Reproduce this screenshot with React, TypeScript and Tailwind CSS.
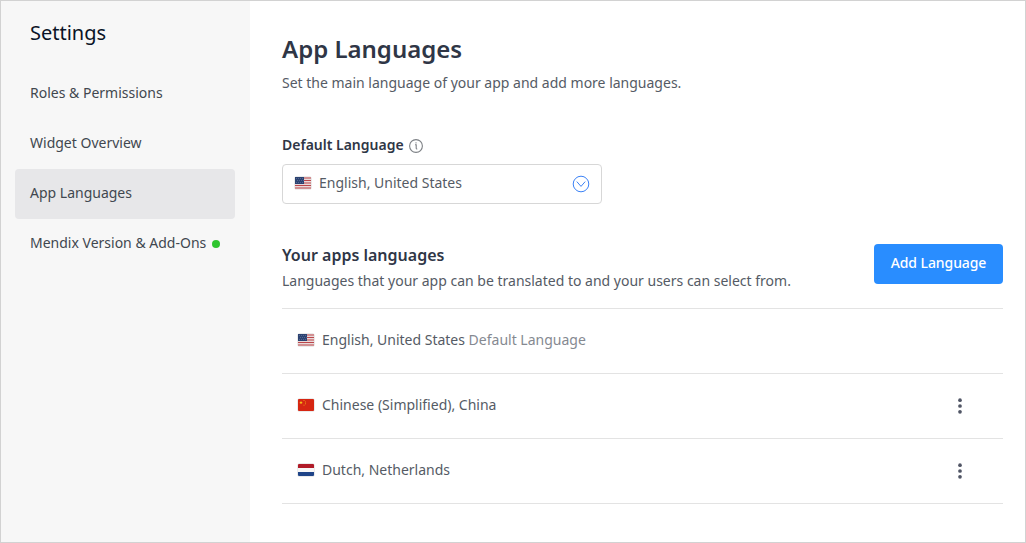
import React from "react";

type Country = "us" | "cn" | "nl";

function Flag({ country }: { country: Country }) {
  return (
    <svg className="h-[14px] w-[18px] shrink-0" viewBox="0 0 18 14" fill="none">
      <rect x="0.5" y="0.5" width="17" height="13" rx="1.5" fill="#000" opacity="0.16" />
      {country === "us" && (
        <g>
          <rect x="1" y="1" width="16" height="12" rx="0.5" fill="#e9dada" />
          <path d="M9 2h8M9 4.500h8M9 7h8M1 9.500h16M1 12h16" stroke="#bb464b" strokeWidth="1.100" />
          <rect x="1" y="1" width="9" height="7" fill="#2c4372" />
          <path d="M2 2.500h7M3 4.500h7M2 6.500h7" stroke="#6f80a6" strokeWidth="0.600" strokeDasharray="1 1" />
        </g>
      )}
      {country === "cn" && (
        <g>
          <rect x="1" y="1" width="16" height="12" rx="1" fill="#d62612" />
          <path d="m4 2.800.5 1.200h1.300l-1 .8.4 1.300L4 5.300l-1.200.8.4-1.300-1-.8h1.300z" fill="#f6c619" />
          <path d="M6.500 2.500h1M8 4h1M8 5.800h1M6.500 7.200h1" stroke="#ef9a19" strokeWidth="0.900" />
        </g>
      )}
      {country === "nl" && (
        <g>
          <rect x="1" y="1" width="16" height="12" rx="1" fill="#f7f7f7" />
          <path d="M1 5V2a1 1 0 0 1 1-1h14a1 1 0 0 1 1 1v3z" fill="#b01b28" />
          <path d="M1 9h16v3a1 1 0 0 1-1 1H2a1 1 0 0 1-1-1z" fill="#1f4488" />
        </g>
      )}
    </svg>
  );
}

function InfoIcon() {
  return (
    <svg className="mt-0.5 size-[14px]" viewBox="0 0 14 14" fill="none" stroke="#7d8085">
      <circle cx="7" cy="7" r="6.400" strokeWidth="1.100" />
      <path d="M6 5.800h1.200v3.500q0 .8 1.100.7" strokeWidth="1.100" />
      <path d="M6.500 3.900h1" strokeWidth="1.200" />
    </svg>
  );
}

function ChevronCircle() {
  return (
    <svg className="size-[18px]" viewBox="0 0 18 18" fill="none" stroke="#3b82f6">
      <circle cx="9" cy="9" r="7.800" strokeWidth="1" />
      <path d="m4.800 6.600 4.200 4.800 4.200-4.800" strokeWidth="1" />
    </svg>
  );
}

function MoreIcon() {
  return (
    <svg className="h-[18px] w-1" viewBox="0 0 4 18" fill="#505565">
      <circle cx="2" cy="3.200" r="1.850" />
      <circle cx="2" cy="9" r="1.850" />
      <circle cx="2" cy="14.800" r="1.850" />
    </svg>
  );
}

const menu = [
  { label: "Roles & Permissions" },
  { label: "Widget Overview" },
  { label: "App Languages", active: true },
  { label: "Mendix Version & Add-Ons", dot: true },
];

const languages: { country: Country; name: string; isDefault?: boolean }[] = [
  { country: "us", name: "English, United States", isDefault: true },
  { country: "cn", name: "Chinese (Simplified), China" },
  { country: "nl", name: "Dutch, Netherlands" },
];

export default function App() {
  return (
    <div className="flex h-[543px] w-[1026px] overflow-hidden border border-[#d2d2d2] bg-white font-['Noto_Sans',sans-serif] text-sm whitespace-nowrap text-[#555b65]">
      <aside className="w-[249px] shrink-0 bg-[#f7f7f7] px-[14px] pt-4">
        <h2 className="px-[15px] text-xl leading-8 text-[#0a1326]">Settings</h2>
        <nav className="mt-5">
          {menu.map((item) => (
            <a
              key={item.label}
              className={`flex h-[50px] w-[220px] items-center rounded px-[15px] pb-0.5 text-[#41474f] ${item.active ? "bg-[#e7e7e9]" : ""}`}
            >
              {item.label}
              {item.dot && <span className="mt-0.5 ml-1.5 size-2 rounded-full bg-[#2fc52f]" />}
            </a>
          ))}
        </nav>
      </aside>

      <main className="flex-1 pt-[30px] pr-[22px] pl-8">
        <h1 className="text-2xl leading-9 font-semibold text-[#2f3646]">App Languages</h1>
        <p className="mt-1.5 leading-5">Set the main language of your app and add more languages.</p>

        <div className="mt-[42px] flex h-5 items-center gap-[5px] font-semibold text-[#2f3646]">
          Default Language
          <InfoIcon />
        </div>
        <div className="mt-[9px] flex h-10 w-80 items-center rounded border border-[#d7d7d7] px-[11px]">
          <div className="flex pb-0.5">
            <Flag country="us" />
          </div>
          <span className="ml-[7px] flex-1 pb-0.5">English, United States</span>
          <ChevronCircle />
        </div>

        <section className="mt-10">
          <div className="flex h-[65px] items-start justify-between border-b border-[#e3e3e3]">
            <div>
              <h3 className="text-base leading-[22px] font-semibold text-[#2f3646]">Your apps languages</h3>
              <p className="mt-[5px] leading-5">Languages that your app can be translated to and your users can select from.</p>
            </div>
            <button className="h-10 w-[129px] rounded bg-[#298dff] pb-0.5 font-medium tracking-[-0.08px] text-white">
              Add Language
            </button>
          </div>
          {languages.map((language) => (
            <div key={language.name} className="flex h-[65px] items-center border-b border-[#e3e3e3] pr-[41px] pl-[15px]">
              <div className="flex pb-0.5">
                <Flag country={language.country} />
              </div>
              <span className="ml-[7px] flex-1 pb-0.5">
                {language.name}
                {language.isDefault && <span className="text-[#858991]"> Default Language</span>}
              </span>
              {!language.isDefault && <MoreIcon />}
            </div>
          ))}
        </section>
      </main>
    </div>
  );
}
